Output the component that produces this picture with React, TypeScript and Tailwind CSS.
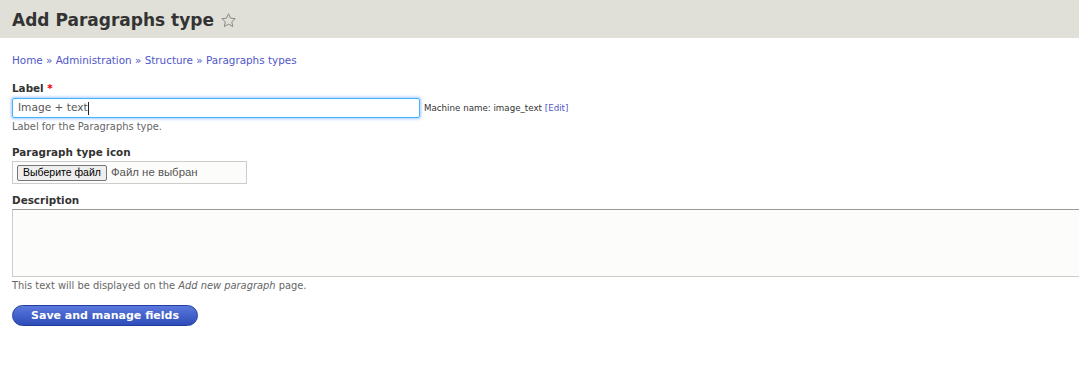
import React from 'react';

const font = { fontFamily: '"DejaVu Sans", Verdana, sans-serif' };
const arial = { fontFamily: '"Liberation Sans", Arial, sans-serif' };

export default function App() {
  return (
    <div className="min-h-[375px] bg-white text-[#333] overflow-hidden" style={font}>
      <div className="h-[38px] bg-[#e0e0d8] px-3 flex items-center">
        <h1 className="text-[17px] font-bold text-[#333] leading-none flex items-center gap-[6px] mt-[3px]">
          Add Paragraphs type
          <svg width="17" height="17" viewBox="0 0 24 24" fill="none" stroke="#888" strokeWidth="1.4" strokeLinejoin="round">
            <path d="M12 2.5l2.9 6.2 6.6.7-4.9 4.5 1.4 6.6L12 17.1l-5.9 3.4 1.4-6.6-4.9-4.5 6.6-.7z" />
          </svg>
        </h1>
      </div>

      <div className="px-3 pt-[15px]">
        <div className="text-[10.4px] text-[#5057c8] leading-[14px]">
          <a>Home</a> » <a>Administration</a> » <a>Structure</a> » <a>Paragraphs types</a>
        </div>

        <div className="mt-[14px]">
          <div className="text-[10.4px] font-bold leading-[14px]">
            Label <span className="text-[#e00]">*</span>
          </div>
          <div className="flex items-center mt-[3px]">
            <div className="w-[408px] h-[20px] border border-[#40b6ff] rounded-[2px] shadow-[0_0_3px_1px_rgba(64,130,255,0.45)] px-[5px] flex items-center text-[10.6px] text-[#555]">
              Image + text<span className="w-px h-[13px] bg-[#222]" />
            </div>
            <div className="ml-[4px] text-[8.7px] leading-none text-[#333]">
              Machine name: image_text <span className="text-[#5057c8]">[Edit]</span>
            </div>
          </div>
          <div className="text-[9.9px] text-[#666] mt-[2px] leading-[14px]">Label for the Paragraphs type.</div>
        </div>

        <div className="mt-[11px]">
          <div className="text-[10.4px] font-bold leading-[14px]">Paragraph type icon</div>
          <div className="mt-[2px] w-[235px] h-[23px] border border-[#ccc] bg-[#fcfcfa] flex items-center pl-[4px] gap-[4px]">
            <span
              className="h-[16px] px-[5px] border border-[#767676] rounded-[2px] bg-[#efefef] text-[10.5px] leading-none flex items-center text-black"
              style={arial}
            >
              Выберите файл
            </span>
            <span className="text-[11.4px] text-[#555]" style={arial}>
              Файл не выбран
            </span>
          </div>
        </div>

        <div className="mt-[9px]">
          <div className="text-[10.4px] font-bold leading-[14px]">Description</div>
          <div className="mt-[2px] mr-[-30px] h-[68px] border border-[#ccc] border-t-[#999] bg-[#fcfcfa]" />
          <div className="text-[9.9px] text-[#666] mt-[2px] leading-[14px]">
            This text will be displayed on the <em>Add new paragraph</em> page.
          </div>
        </div>

        <button className="mt-[12px] w-[186px] h-[21px] rounded-full border border-[#1e3d9e] bg-gradient-to-b from-[#5a78dd] to-[#2f4cb8] text-white text-[11px] font-bold leading-none">
          Save and manage fields
        </button>
      </div>
    </div>
  );
}
